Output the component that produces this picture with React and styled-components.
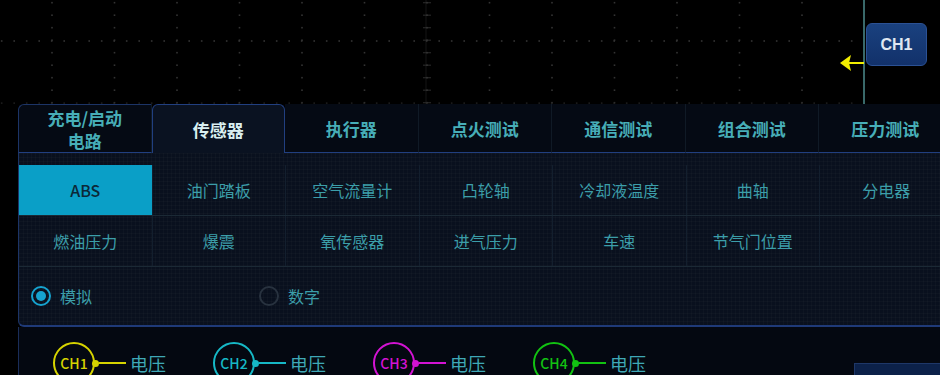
import React from 'react'
import styled, { createGlobalStyle } from 'styled-components'

const GlobalStyle = createGlobalStyle`
  html, body {
    margin: 0;
    padding: 0;
    background: #000;
  }
  body {
    font-family: "Noto Sans CJK SC", "Noto Sans", sans-serif;
  }
`;

const Screen = styled.div`
  width: 940px;
  height: 375px;
  overflow: hidden;
  background: #000;
  display: flex;
  flex-direction: column;
`;

const Scope = styled.div`
  position: relative;
  height: 104px;
  flex: none;
`;

const ChannelBadge = styled.div`
  position: absolute;
  left: 866px;
  top: 23px;
  width: 61px;
  height: 43px;
  box-sizing: border-box;
  border-radius: 6px;
  background: linear-gradient(#1a417f, #12316a);
  border: 1px solid #2b5194;
  display: flex;
  align-items: center;
  justify-content: center;
  color: #dfe7f1;
  font-family: "Liberation Sans", Arial, sans-serif;
  font-weight: 700;
  font-size: 16px;
`;

const Panel = styled.div`
  margin-left: 18px;
  width: 940px;
  display: flex;
  flex-direction: column;
  flex: 1;
`;

const TabBar = styled.div`
  display: grid;
  grid-template-columns: repeat(7, 133.5px);
  height: 49px;
  flex: none;
`;

const Tab = styled.div`
  box-sizing: border-box;
  display: flex;
  align-items: center;
  justify-content: center;
  text-align: center;
  font-size: 17px;
  line-height: 23px;
  font-weight: 700;
  white-space: pre-line;
  ${({ $active }) => $active ? `
    color: #d9eef0;
    background: #0a1221;
    border: 1px solid #213f80;
    border-bottom: none;
    border-radius: 6px 6px 0 0;
  ` : `
    color: #47aeb8;
    background: #050a14;
    border-bottom: 1px solid #213f80;
    border-right: 1px solid #101a26;
  `}
  ${({ $first }) => $first ? `
    border-left: 1px solid #1c3466;
    border-top: 1px solid #1c3466;
    border-top-left-radius: 6px;
  ` : ``}
`;

const Body = styled.div`
  flex: none;
  padding-top: 12px;
  background-color: #09101e;
  background-image:
    linear-gradient(rgba(255,255,255,0.018) 1px, transparent 1px),
    linear-gradient(90deg, rgba(255,255,255,0.018) 1px, transparent 1px);
  background-size: 4px 4px;
  border-left: 1px solid #1c3466;
  border-bottom: 2px solid #1f3a78;
  border-bottom-left-radius: 6px;
`;

const ItemRow = styled.div`
  display: grid;
  grid-template-columns: repeat(7, 133.5px);
  height: 50px;
  border-bottom: 1px solid #1b2935;
`;

const Item = styled.div`
  display: flex;
  align-items: center;
  justify-content: center;
  font-size: 16px;
  box-sizing: border-box;
  border-right: 1px solid #131f2e;
  ${({ $active }) => $active ? `
    background: #0a9fc7;
    color: #0c2838;
    font-weight: 500;
  ` : `
    color: #3c9ea9;
  `}
`;

const RadioRow = styled.div`
  height: 58px;
  display: grid;
  grid-template-columns: 228px 228px;
  align-items: center;
  padding-left: 12px;
`;

const RadioOption = styled.label`
  display: flex;
  align-items: center;
  gap: 9px;
  font-size: 16px;
  color: #3c9ea9;
`;

const RadioMark = styled.span`
  width: 20px;
  height: 20px;
  box-sizing: border-box;
  border-radius: 50%;
  border: 2px solid ${({ $checked }) => $checked ? '#16a3cf' : '#28323f'};
  display: flex;
  align-items: center;
  justify-content: center;
  &::before {
    content: '';
    width: 10px;
    height: 10px;
    border-radius: 50%;
    background: ${({ $checked }) => $checked ? '#16a3cf' : 'transparent'};
  }
`;

const ChannelRow = styled.div`
  flex: 1;
  display: flex;
  align-items: flex-start;
  padding: 15px 0 0 34px;
  background: #040811;
  border-left: 1px solid #1a2d58;
`;

const Channel = styled.div`
  width: 160px;
  flex: none;
  display: flex;
  align-items: center;
  color: ${({ $color }) => $color};
`;

const ChannelCircle = styled.div`
  width: 42px;
  height: 42px;
  box-sizing: border-box;
  border-radius: 50%;
  border: 2px solid currentColor;
  display: flex;
  align-items: center;
  justify-content: center;
  font-size: 14px;
  font-weight: 500;
  flex: none;
`;

const Connector = styled.div`
  display: flex;
  align-items: center;
  width: 34px;
  margin-left: -3px;
  &::before {
    content: '';
    width: 7px;
    height: 7px;
    border-radius: 50%;
    background: currentColor;
    flex: none;
  }
  &::after {
    content: '';
    flex: 1;
    height: 2px;
    background: currentColor;
  }
`;

const ChannelLabel = styled.span`
  margin-left: 4px;
  font-size: 18px;
  color: #3fa8b6;
`;

const CornerBox = styled.div`
  margin-left: auto;
  margin-top: 21px;
  width: 102px;
  height: 40px;
  background: #0c2149;
  border: 1px solid #1e3768;
`;

const tabs = ['充电/启动\n电路', '传感器', '执行器', '点火测试', '通信测试', '组合测试', '压力测试'];
const rows = [
  ['ABS', '油门踏板', '空气流量计', '凸轮轴', '冷却液温度', '曲轴', '分电器'],
  ['燃油压力', '爆震', '氧传感器', '进气压力', '车速', '节气门位置', ''],
];
const channels = [
  { name: 'CH1', color: '#d6d300' },
  { name: 'CH2', color: '#16b8c6' },
  { name: 'CH3', color: '#d313d3' },
  { name: 'CH4', color: '#12c212' },
];

function ScopeGrid() {
  const dots = [];
  const xs = Array.from({ length: 13 }, (_, i) => 52 + i * 62.5);
  const ys = Array.from({ length: 9 }, (_, i) => 2.7 + i * 12.5);
  xs.forEach((x, i) => {
    ys.forEach((y, j) => {
      if (i === 6) {
        dots.push(<rect key={`t${j}`} x={x - 4} y={y - 0.6} width={8} height={1.2} fill="#262626" />);
      }
      dots.push(<rect key={`v${i}-${j}`} x={x - 0.8} y={y - 0.8} width={1.6} height={1.6} fill="#333" />);
    });
  });
  for (let k = 0; k < 69; k++) {
    const x = 1.7 + k * 12.5;
    dots.push(<rect key={`h${k}`} x={x - 0.8} y={40.2} width={1.6} height={1.6} fill="#333" />);
    dots.push(<rect key={`b${k}`} x={x - 0.8} y={102.5} width={1.6} height={1.2} fill="#262626" />);
  }
  return (
    <svg width="940" height="104" style={{ display: 'block' }}>
      <line x1="426" y1="0" x2="426" y2="104" stroke="#141414" strokeWidth="1" />
      {dots}
      <line x1="864" y1="0" x2="864" y2="104" stroke="#4c8c8e" strokeWidth="1.5" />
      <line x1="848" y1="63" x2="864" y2="63" stroke="#f2ee00" strokeWidth="2" />
      <path d="M 840 63 L 851 55 L 849 63 L 851 71 Z" fill="#f2ee00" />
    </svg>
  );
}

export default function App() {
  return (
    <Screen>
      <GlobalStyle />
      <Scope>
        <ScopeGrid />
        <ChannelBadge>CH1</ChannelBadge>
      </Scope>
      <Panel>
        <TabBar>
          {tabs.map((t, i) => (
            <Tab key={t} $active={i === 1} $first={i === 0}>{t}</Tab>
          ))}
        </TabBar>
        <Body>
          {rows.map((row, r) => (
            <ItemRow key={r}>
              {row.map((label, c) => (
                <Item key={c} $active={r === 0 && c === 0}>{label}</Item>
              ))}
            </ItemRow>
          ))}
          <RadioRow>
            <RadioOption><RadioMark $checked />模拟</RadioOption>
            <RadioOption><RadioMark />数字</RadioOption>
          </RadioRow>
        </Body>
        <ChannelRow>
          {channels.map(ch => (
            <Channel key={ch.name} $color={ch.color}>
              <ChannelCircle>{ch.name}</ChannelCircle>
              <Connector />
              <ChannelLabel>电压</ChannelLabel>
            </Channel>
          ))}
          <CornerBox />
        </ChannelRow>
      </Panel>
    </Screen>
  )
}
